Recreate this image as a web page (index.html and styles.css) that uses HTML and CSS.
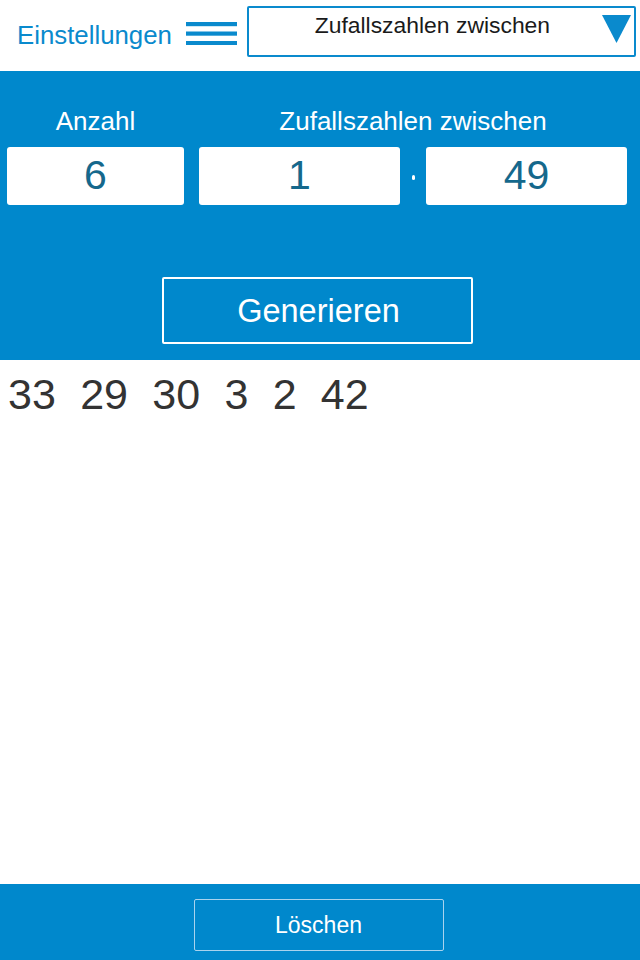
FILE: index.html
```html
<!DOCTYPE html>
<html lang="de">
<head>
<meta charset="utf-8">
<title>Zufallszahlen</title>
<link rel="stylesheet" href="styles.css">
</head>
<body>
<div class="app">
  <header class="topbar">
    <span class="settings">Einstellungen</span>
    <svg class="burger" width="51" height="23" viewBox="0 0 51 23" aria-hidden="true">
      <rect x="0" y="0" width="51" height="4.2" fill="#0a8acd"/>
      <rect x="0" y="9.5" width="51" height="4.2" fill="#0a8acd"/>
      <rect x="0" y="19" width="51" height="4.2" fill="#0a8acd"/>
    </svg>
    <div class="dropdown">
      <span class="dropdown-text">Zufallszahlen zwischen</span>
      <svg class="caret" width="29" height="28" viewBox="0 0 29 28" aria-hidden="true">
        <polygon points="0,0 29,0 14.5,28" fill="#0a8acd"/>
      </svg>
    </div>
  </header>

  <section class="panel">
    <div class="fields">
      <div class="col-count">
        <div class="label">Anzahl</div>
        <div class="box">6</div>
      </div>
      <div class="col-range">
        <div class="label">Zufallszahlen zwischen</div>
        <div class="range-row">
          <div class="box box-wide">1</div>
          <div class="sep"><span class="dot"></span></div>
          <div class="box box-wide">49</div>
        </div>
      </div>
    </div>
    <div class="action">
      <button class="btn-generate">Generieren</button>
    </div>
  </section>

  <main class="results">
    <span>33</span><span>29</span><span>30</span><span>3</span><span>2</span><span>42</span>
  </main>

  <footer class="footer">
    <button class="btn-clear">Löschen</button>
  </footer>
</div>
</body>
</html>
```

FILE: styles.css
```css
* { box-sizing: border-box; }

html, body {
  margin: 0;
  padding: 0;
  background: #ffffff;
}

body {
  font-family: "Liberation Sans", Arial, Helvetica, sans-serif;
}

.app {
  width: 640px;
  height: 960px;
  display: flex;
  flex-direction: column;
}

/* Header */
.topbar {
  height: 71px;
  display: flex;
  align-items: flex-start;
  flex: 0 0 auto;
}

.settings {
  margin-left: 17px;
  margin-top: 20px;
  font-size: 25.8px;
  line-height: 30px;
  color: #0a8acd;
}

.burger {
  display: block;
  margin-left: 14px;
  margin-top: 22px;
}

.dropdown {
  margin-left: 10px;
  margin-top: 6px;
  width: 389px;
  height: 51px;
  border: 2px solid #0a8acd;
  border-radius: 2px;
  display: flex;
  align-items: flex-start;
}

.dropdown-text {
  flex: 1;
  text-align: center;
  padding-left: 14px;
  padding-top: 4px;
  font-size: 22.9px;
  line-height: 26px;
  color: #1a1a1a;
}

.caret {
  display: block;
  margin-top: 7px;
  margin-right: 3px;
}

/* Blue panel */
.panel {
  background: #0088cc;
  height: 289px;
  flex: 0 0 auto;
  padding-top: 36px;
}

.fields {
  display: flex;
  padding-left: 7px;
}

.col-count {
  width: 177px;
}

.col-range {
  width: 428px;
  margin-left: 15px;
}

.label {
  color: #ffffff;
  font-size: 26px;
  line-height: 28px;
  text-align: center;
  height: 40px;
}

.range-row {
  display: flex;
}

.box {
  height: 58px;
  background: #ffffff;
  border-radius: 3px;
  color: #15688c;
  font-size: 41px;
  line-height: 56px;
  text-align: center;
}

.box-wide {
  width: 201px;
}

.sep {
  width: 26px;
  display: flex;
  align-items: center;
  justify-content: center;
}

.dot {
  display: block;
  width: 3px;
  height: 5px;
  border-radius: 2px;
  background: #ffffff;
  margin-top: 2px;
}

.action {
  display: flex;
  justify-content: center;
  padding-top: 72px;
}

.btn-generate {
  width: 311px;
  height: 67px;
  background: transparent;
  border: 2px solid #ffffff;
  border-radius: 2px;
  color: #ffffff;
  font-family: "Liberation Sans", Arial, Helvetica, sans-serif;
  font-size: 32.5px;
  line-height: 36px;
  padding: 0 0 0 2px;
  margin-left: -5px;
}

/* Results */
.results {
  flex: 1;
  padding: 10px 0 0 8px;
  display: flex;
  align-items: flex-start;
  gap: 24.3px;
  font-size: 43px;
  line-height: 48px;
  color: #333333;
}

/* Footer */
.footer {
  background: #0088cc;
  height: 76px;
  flex: 0 0 auto;
  display: flex;
  justify-content: center;
  padding-top: 15px;
}

.btn-clear {
  width: 250px;
  height: 52px;
  background: transparent;
  border: 1.5px solid #a9d3ee;
  border-radius: 2px;
  color: #ffffff;
  font-family: "Liberation Sans", Arial, Helvetica, sans-serif;
  font-size: 23px;
  line-height: 26px;
  padding: 0;
  margin-left: -3px;
}
```
